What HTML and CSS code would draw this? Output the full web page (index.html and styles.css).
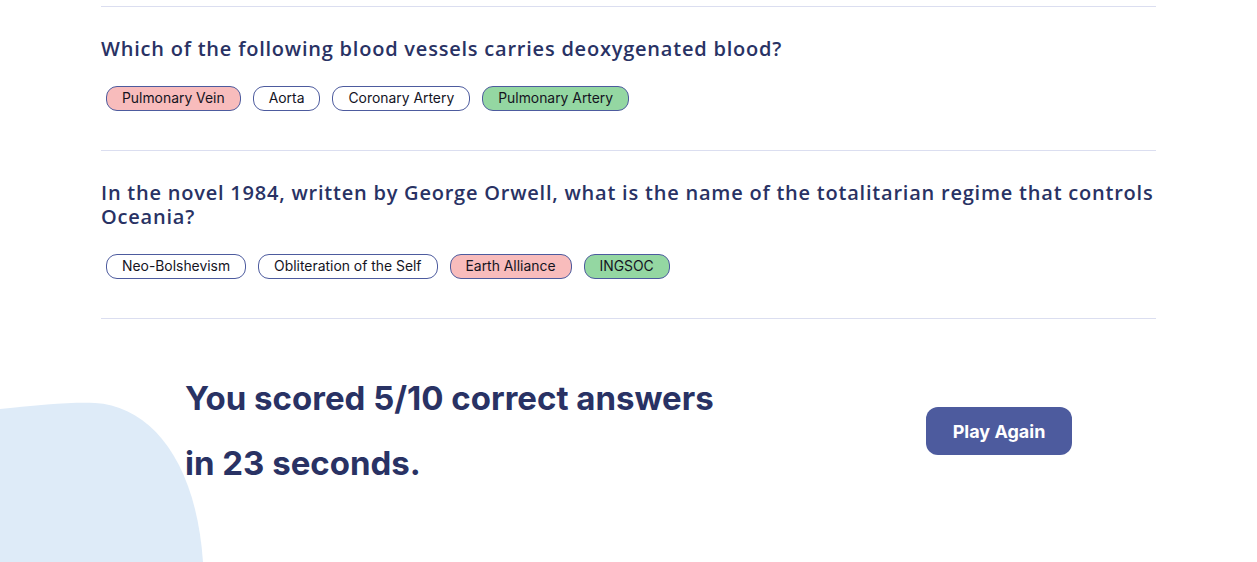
FILE: index.html
```html
<!DOCTYPE html>
<html lang="en">
<head>
<meta charset="utf-8">
<title>Quizzical</title>
<link rel="stylesheet" href="styles.css">
</head>
<body>
<svg class="blob" width="210" height="160" viewBox="0 402 210 160" aria-hidden="true">
  <path d="M0,409 C40,405 70,402 95,403 C150,406 196,460 203,562 L0,562 Z" fill="#deebf8"/>
</svg>
<main class="quiz">
  <hr class="divider">
  <section class="question">
    <h3 class="question-text">Which of the following blood vessels carries deoxygenated blood?</h3>
    <div class="answers">
      <span class="answer wrong">Pulmonary Vein</span>
      <span class="answer">Aorta</span>
      <span class="answer">Coronary Artery</span>
      <span class="answer correct">Pulmonary Artery</span>
    </div>
  </section>
  <hr class="divider">
  <section class="question">
    <h3 class="question-text">In the novel 1984, written by George Orwell, what is the name of the totalitarian regime that controls Oceania?</h3>
    <div class="answers">
      <span class="answer">Neo-Bolshevism</span>
      <span class="answer">Obliteration of the Self</span>
      <span class="answer wrong">Earth Alliance</span>
      <span class="answer correct">INGSOC</span>
    </div>
  </section>
  <hr class="divider">
  <div class="result">
    <h2 class="score">You scored 5/10 correct answers <br>in 23 seconds.</h2>
    <button class="play-again">Play Again</button>
  </div>
</main>
</body>
</html>
```

FILE: styles.css
```css
html, body {
  margin: 0;
  padding: 0;
  background: #ffffff;
}
body {
  font-family: Inter, "Liberation Sans", sans-serif;
  color: #293264;
  position: relative;
  min-height: 562px;
  overflow: hidden;
}
.blob {
  position: absolute;
  left: 0;
  top: 402px;
  z-index: 0;
}
.quiz {
  position: relative;
  z-index: 1;
  width: 1055px;
  margin: 0 auto;
  padding-top: 6px;
}
.divider {
  border: 0;
  height: 1px;
  background: #dbdef0;
  margin: 0;
}
.question {
  padding: 30px 0 39px;
}
.question-text {
  margin: 0 0 25px;
  font-family: "Open Sans", sans-serif;
  font-weight: 600;
  font-size: 20px;
  letter-spacing: 0.78px;
  line-height: 24px;
  color: #293264;
}
.answers {
  display: flex;
  gap: 12px;
  padding-left: 5px;
}
.answer {
  display: inline-block;
  box-sizing: border-box;
  height: 25px;
  padding: 0 15px;
  border: 1px solid #4d5b9e;
  border-radius: 11px;
  font-family: Inter, sans-serif;
  font-size: 13.9px;
  line-height: 23px;
  color: #14141f;
  background: #ffffff;
}
.answer.wrong {
  background: #f8bcbc;
}
.answer.correct {
  background: #94d7a2;
}
.result {
  display: flex;
  align-items: center;
  justify-content: space-between;
  padding: 47px 84px 0 84px;
}
.score {
  margin: 0;
  font-family: Inter, sans-serif;
  font-weight: 700;
  font-size: 33px;
  line-height: 65px;
  color: #293264;
}
.play-again {
  width: 146px;
  height: 48px;
  border: 0;
  border-radius: 12px;
  background: #4d5b9e;
  color: #ffffff;
  font-family: Inter, sans-serif;
  font-weight: 700;
  font-size: 18px;
  cursor: pointer;
}
```
